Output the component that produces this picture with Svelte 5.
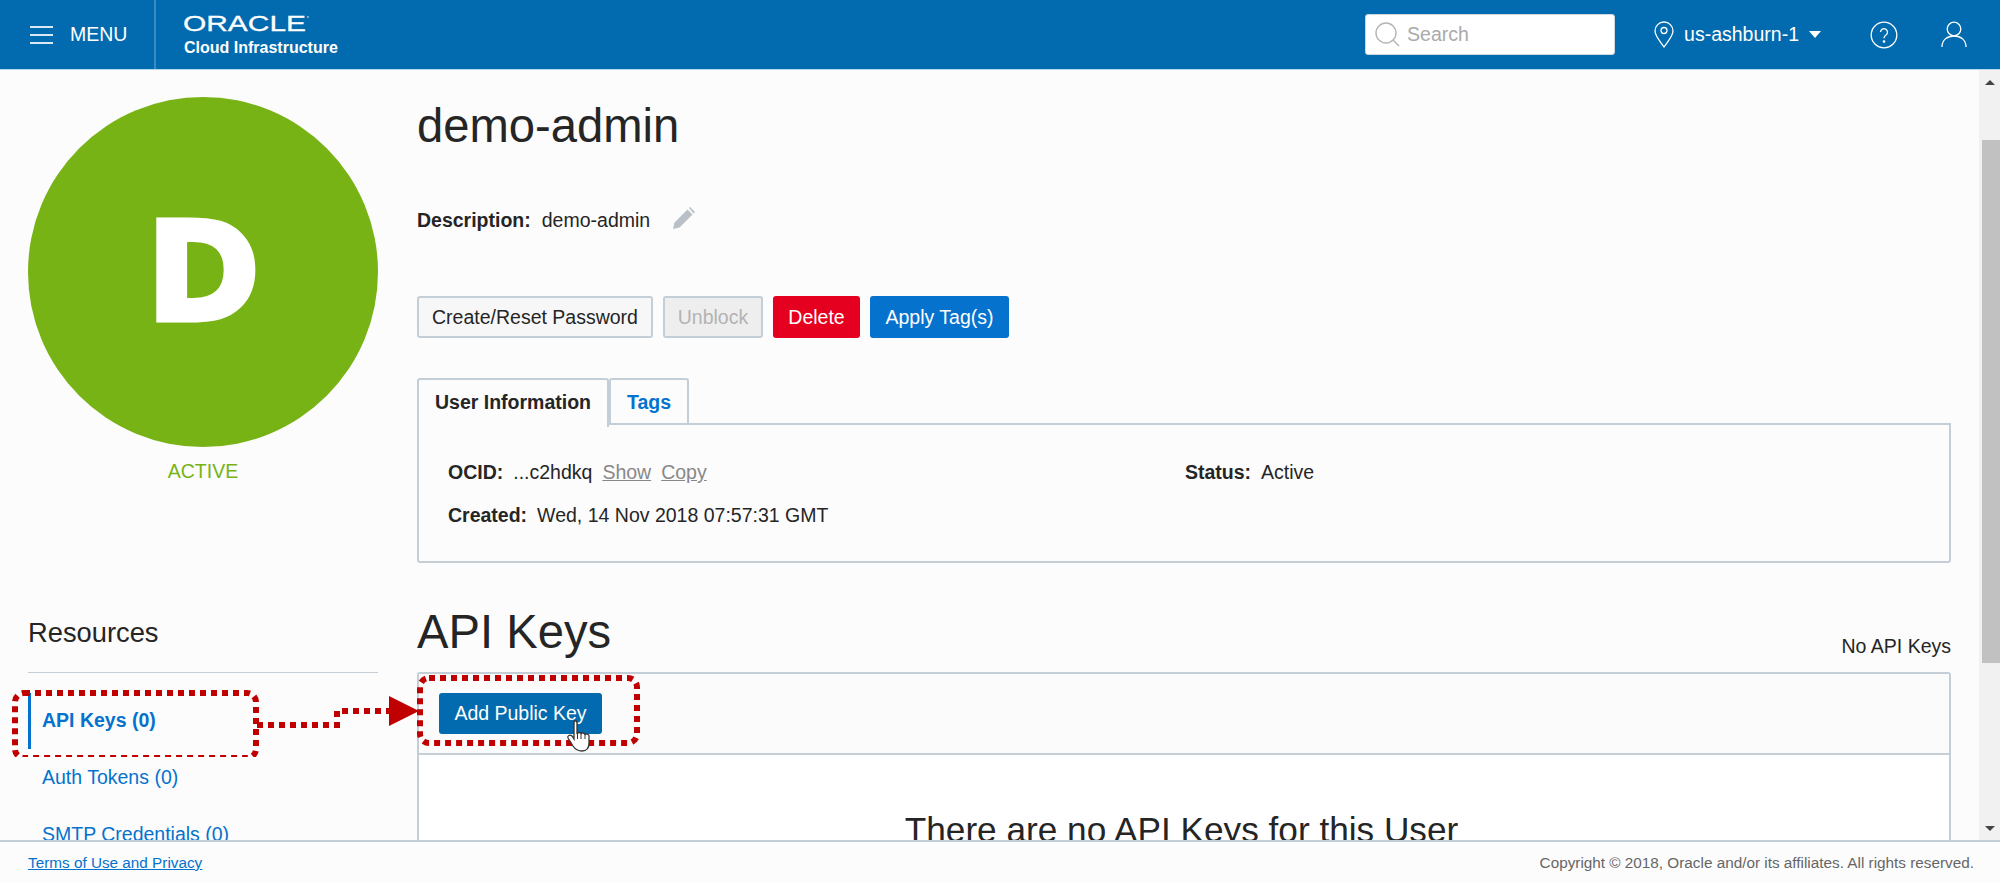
<script lang="ts">
	const resources = [
		{ label: 'API Keys (0)', active: true },
		{ label: 'Auth Tokens (0)', active: false },
		{ label: 'SMTP Credentials (0)', active: false },
		{ label: 'Customer Secret Keys (0)', active: false }
	];
</script>

<div class="shell">
	<header class="top">
		<button class="menu">
			<span class="burger"><i></i><i></i><i></i></span>
			MENU
		</button>
		<div class="brand">
			<svg class="logo" width="130" height="20" viewBox="0 0 130 20">
				<text x="0" y="17" textLength="123" lengthAdjust="spacingAndGlyphs" class="logo-text">ORACLE</text>
				<circle cx="125" cy="3" r="0.8" fill="#fff" />
			</svg>
			<span class="brand-sub">Cloud Infrastructure</span>
		</div>
		<div class="top-right">
			<div class="search">
				<svg width="27" height="27" viewBox="0 0 27 27" fill="none" stroke="#b5b5b5" stroke-width="1.4">
					<circle cx="12" cy="12" r="10" />
					<path d="M19 19l6 6" />
				</svg>
				<span>Search</span>
			</div>
			<div class="region">
				<svg width="20" height="27" viewBox="0 0 20 27" fill="none" stroke="#fff" stroke-width="1.3">
					<path d="M10 26C6 20 1 15 1 10a9 9 0 0 1 18 0c0 5-5 10-9 16z" />
					<circle cx="10" cy="9.500" r="3" />
				</svg>
				<span>us-ashburn-1</span>
				<i class="caret"></i>
			</div>
			<svg class="help" width="28" height="28" viewBox="0 0 28 28" fill="none" stroke="#fff" stroke-width="1.3">
				<circle cx="14" cy="14" r="12.800" />
				<path d="M10.500 11a3.500 3.500 0 1 1 5.500 3c-1.300.9-2 1.500-2 3.200" />
				<circle cx="14" cy="20.500" r="0.7" fill="#fff" />
			</svg>
			<svg class="user" width="26" height="27" viewBox="0 0 26 27" fill="none" stroke="#fff" stroke-width="1.3">
				<circle cx="13" cy="8" r="6.800" />
				<path d="M1 26c0-7 5-11 12-11s12 4 12 11" />
			</svg>
		</div>
	</header>

	<div class="page">
		<aside class="side">
			<div class="avatar">D</div>
			<div class="state">ACTIVE</div>
			<h3>Resources</h3>
			<nav>
				{#each resources as r (r.label)}
					<a class:active={r.active} href="#top">{r.label}</a>
				{/each}
			</nav>
		</aside>

		<main class="content">
			<h1>demo-admin</h1>
			<div class="desc">
				<b>Description:</b>
				<span>demo-admin</span>
				<svg width="23" height="22" viewBox="0 0 23 22" fill="#b9c0c8">
					<path d="M0 22l1.500-6.500L14.500 2.500l5 5L6.500 20.500zM16 1l1-1 5 5-1.500 1.500z" />
				</svg>
			</div>
			<div class="actions">
				<button class="btn reset">Create/Reset Password</button>
				<button class="btn off">Unblock</button>
				<button class="btn red">Delete</button>
				<button class="btn blue">Apply Tag(s)</button>
			</div>
			<div class="tabs">
				<div class="tab on">User Information</div>
				<div class="tab">Tags</div>
			</div>
			<section class="info">
				<div class="info-col">
					<div class="row">
						<b>OCID:</b><span>...c2hdkq</span><a href="#top">Show</a><a href="#top">Copy</a>
					</div>
					<div class="row">
						<b>Created:</b><span>Wed, 14 Nov 2018 07:57:31 GMT</span>
					</div>
				</div>
				<div class="info-col">
					<div class="row"><b>Status:</b><span>Active</span></div>
				</div>
			</section>
			<div class="list-head">
				<h2>API Keys</h2>
				<span>No API Keys</span>
			</div>
			<section class="keys">
				<div class="keys-bar">
					<button class="add">Add Public Key</button>
				</div>
				<div class="keys-empty">
					<p>There are no API Keys for this User</p>
				</div>
			</section>
		</main>

		<div class="scroll">
			<i class="up"></i>
			<div class="thumb"></div>
			<i class="down"></i>
		</div>

		<!-- callout drawn on top of the screenshot -->
		<svg class="callout" width="660" height="100" viewBox="0 0 660 100" fill="none">
			<g stroke="#c00000" stroke-width="6" stroke-dasharray="6 5">
				<rect x="15" y="36" width="241" height="65" rx="9" />
				<rect x="420" y="21" width="217" height="65" rx="9" />
				<path d="M257 68H337V54H392" />
			</g>
			<path d="M389 39L419 54L389 69z" fill="#c00000" />
			<path
				d="M574 66v16l-2-3c-2-2-5 0-4 2l5 8c2 3 5 5 9 5 5 0 7-3 7-8v-7c0-2-3-3-4-1 0-2-3-3-4-1 0-2-3-2-4 0v-11c0-3-3-3-3 0z"
				fill="#fff"
				stroke="#333"
				stroke-width="1.300"
			/>
			<path d="M577.500 76v6M581 77v5M585 78v4" stroke="#333" />
		</svg>
	</div>

	<footer class="foot">
		<a href="#top">Terms of Use and Privacy</a>
		<span>Copyright © 2018, Oracle and/or its affiliates. All rights reserved.</span>
	</footer>
</div>

<style>
	:global(body) {
		margin: 0;
		background: #fcfcfc;
	}
	.shell {
		display: flex;
		flex-direction: column;
		height: 883px;
		overflow: hidden;
		font-family: 'Liberation Sans', Arial, sans-serif;
		font-size: 19.5px;
		color: #252525;
	}
	.top {
		display: flex;
		align-items: center;
		flex: none;
		height: 69px;
		background: #026aae;
		border-bottom: 1px solid #b9d7ea;
		color: #fff;
	}
	.menu {
		display: flex;
		align-items: center;
		gap: 17px;
		height: 100%;
		width: 156px;
		box-sizing: border-box;
		padding: 0 0 0 30px;
		background: none;
		border: none;
		border-right: 2px solid #3a8bc0;
		color: #fff;
		font: inherit;
	}
	.burger {
		display: flex;
		flex-direction: column;
		gap: 6px;
		width: 23px;
	}
	.burger i {
		display: block;
		height: 2px;
		background: #d9e9f3;
	}
	.brand {
		display: flex;
		flex-direction: column;
		margin-left: 27px;
	}
	.logo {
		display: block;
		margin-top: 3px;
	}
	.logo-text {
		font-size: 22px;
		fill: #fff;
		stroke: #fff;
		stroke-width: 0.3px;
	}
	.brand-sub {
		font-size: 16px;
		font-weight: 700;
		line-height: 22px;
		margin: 3px 0 0 1px;
	}
	.top-right {
		display: flex;
		align-items: center;
		margin-left: auto;
		padding-right: 33px;
	}
	.search {
		display: flex;
		align-items: center;
		gap: 6px;
		box-sizing: border-box;
		width: 250px;
		height: 41px;
		padding-left: 8px;
		background: #fff;
		border: 1px solid #cfd6dc;
		border-radius: 3px;
		color: #aaa;
	}
	.region {
		display: flex;
		align-items: center;
		gap: 10px;
		margin-left: 39px;
	}
	.caret {
		border: 6.500px solid transparent;
		border-top: 7px solid #fff;
		border-bottom: 0;
	}
	.help {
		margin-left: 49px;
	}
	.user {
		margin-left: 43px;
	}
	.page {
		position: relative;
		display: flex;
		flex: 1;
		min-height: 0;
		overflow: hidden;
	}
	.side {
		flex: none;
		width: 350px;
		margin-left: 28px;
	}
	.avatar {
		display: flex;
		align-items: center;
		justify-content: center;
		width: 350px;
		height: 350px;
		margin-top: 27px;
		border-radius: 50%;
		background: #78b316;
		color: #fff;
		font-family: 'DejaVu Sans', sans-serif;
		font-size: 137px;
		font-weight: 700;
		-webkit-text-stroke: 5px #fff;
	}
	.state {
		margin-top: 10px;
		line-height: 28px;
		text-align: center;
		color: #78b316;
	}
	h3 {
		margin: 128px 0 0;
		padding-bottom: 19px;
		border-bottom: 1px solid #c4ced7;
		font-size: 27.300px;
		font-weight: 400;
		line-height: 40px;
	}
	nav {
		display: flex;
		flex-direction: column;
		margin-top: 20px;
	}
	nav a {
		display: block;
		flex: none;
		height: 56px;
		margin-bottom: 1px;
		padding-left: 14px;
		border-left: 0;
		color: #0572ce;
		line-height: 55px;
		text-decoration: none;
	}
	nav a.active {
		padding-left: 11px;
		border-left: 3px solid #0572ce;
		font-weight: 700;
	}
	.content {
		flex: 1;
		min-width: 0;
		margin: 0 28px 0 39px;
	}
	h1 {
		margin: 31px 0 0;
		font-size: 47.200px;
		font-weight: 400;
		line-height: 50px;
	}
	.desc {
		display: flex;
		align-items: center;
		gap: 11px;
		margin-top: 55px;
		line-height: 28px;
	}
	.desc svg {
		margin: -4px 0 0 12px;
	}
	.actions {
		display: flex;
		gap: 10px;
		margin-top: 62px;
	}
	.btn {
		box-sizing: border-box;
		width: 100px;
		height: 42px;
		padding: 0;
		border: 2px solid #c4ced7;
		border-radius: 3px;
		background: #f7f7f7;
		color: #252525;
		font: inherit;
	}
	.btn.reset {
		width: 236px;
	}
	.btn.off {
		background: #eee;
		color: #b3b3b3;
	}
	.btn.red {
		width: 87px;
		border: none;
		background: #e6001f;
		color: #fff;
	}
	.btn.blue {
		width: 139px;
		border: none;
		background: #0572ce;
		color: #fff;
	}
	.tabs {
		position: relative;
		z-index: 1;
		display: flex;
		height: 47px;
		margin-top: 40px;
	}
	.tab {
		box-sizing: border-box;
		height: 47px;
		padding: 0 16px;
		border: 2px solid #c4ced7;
		border-bottom: none;
		border-radius: 3px 3px 0 0;
		color: #0572ce;
		font-weight: 700;
		line-height: 44px;
		white-space: nowrap;
	}
	.tab.on {
		height: 49px;
		width: 192px;
		background: #fcfcfc;
		color: #252525;
	}
	.info {
		display: grid;
		grid-template-columns: 737px 1fr;
		box-sizing: border-box;
		height: 140px;
		margin-top: -2px;
		padding: 33px 29px 0;
		border: 2px solid #c4ced7;
		border-radius: 0 0 3px 3px;
	}
	.row {
		display: flex;
		gap: 10px;
		line-height: 28px;
		margin-bottom: 15px;
	}
	.row a {
		color: #888;
	}
	.list-head {
		display: flex;
		align-items: flex-end;
		justify-content: space-between;
		margin-top: 37px;
		height: 60px;
	}
	h2 {
		margin: 0 0 -2px;
		font-size: 47.200px;
		font-weight: 400;
		line-height: 60px;
	}
	.list-head span {
		line-height: 28px;
	}
	.keys {
		margin-top: 12px;
		border: 2px solid #c4ced7;
		border-radius: 3px 3px 0 0;
		background: #fff;
	}
	.keys-bar {
		box-sizing: border-box;
		height: 81px;
		padding: 19px 20px 0;
		background: #fbfbfb;
		border-bottom: 2px solid #c4ced7;
	}
	.add {
		display: block;
		width: 163px;
		height: 41px;
		padding: 0;
		border: none;
		border-radius: 3px;
		background: #026aae;
		color: #fff;
		font: inherit;
	}
	.keys-empty {
		height: 200px;
		padding-right: 5px;
		text-align: center;
	}
	.keys-empty p {
		margin: 0;
		padding-top: 53px;
		font-size: 35.200px;
		line-height: 44px;
	}
	.scroll {
		position: relative;
		flex: none;
		width: 21px;
		background: #f1f1f1;
	}
	.up,
	.down {
		position: absolute;
		left: 6px;
		border: 5px solid transparent;
	}
	.up {
		top: 10px;
		border-bottom: 5px solid #444;
		border-top: 0;
	}
	.down {
		bottom: 9px;
		border-top: 5px solid #444;
		border-bottom: 0;
	}
	.thumb {
		position: absolute;
		top: 70px;
		left: 3px;
		right: 0;
		height: 523px;
		background: #c1c1c1;
	}
	.callout {
		position: absolute;
		left: 0;
		top: 587px;
	}
	.foot {
		display: flex;
		align-items: center;
		justify-content: space-between;
		flex: none;
		box-sizing: border-box;
		height: 43px;
		padding: 0 26px 0 28px;
		border-top: 2px solid #c4ced7;
		background: #fcfcfc;
		font-size: 15.300px;
		color: #666;
	}
	.foot a {
		color: #0572ce;
	}
</style>
